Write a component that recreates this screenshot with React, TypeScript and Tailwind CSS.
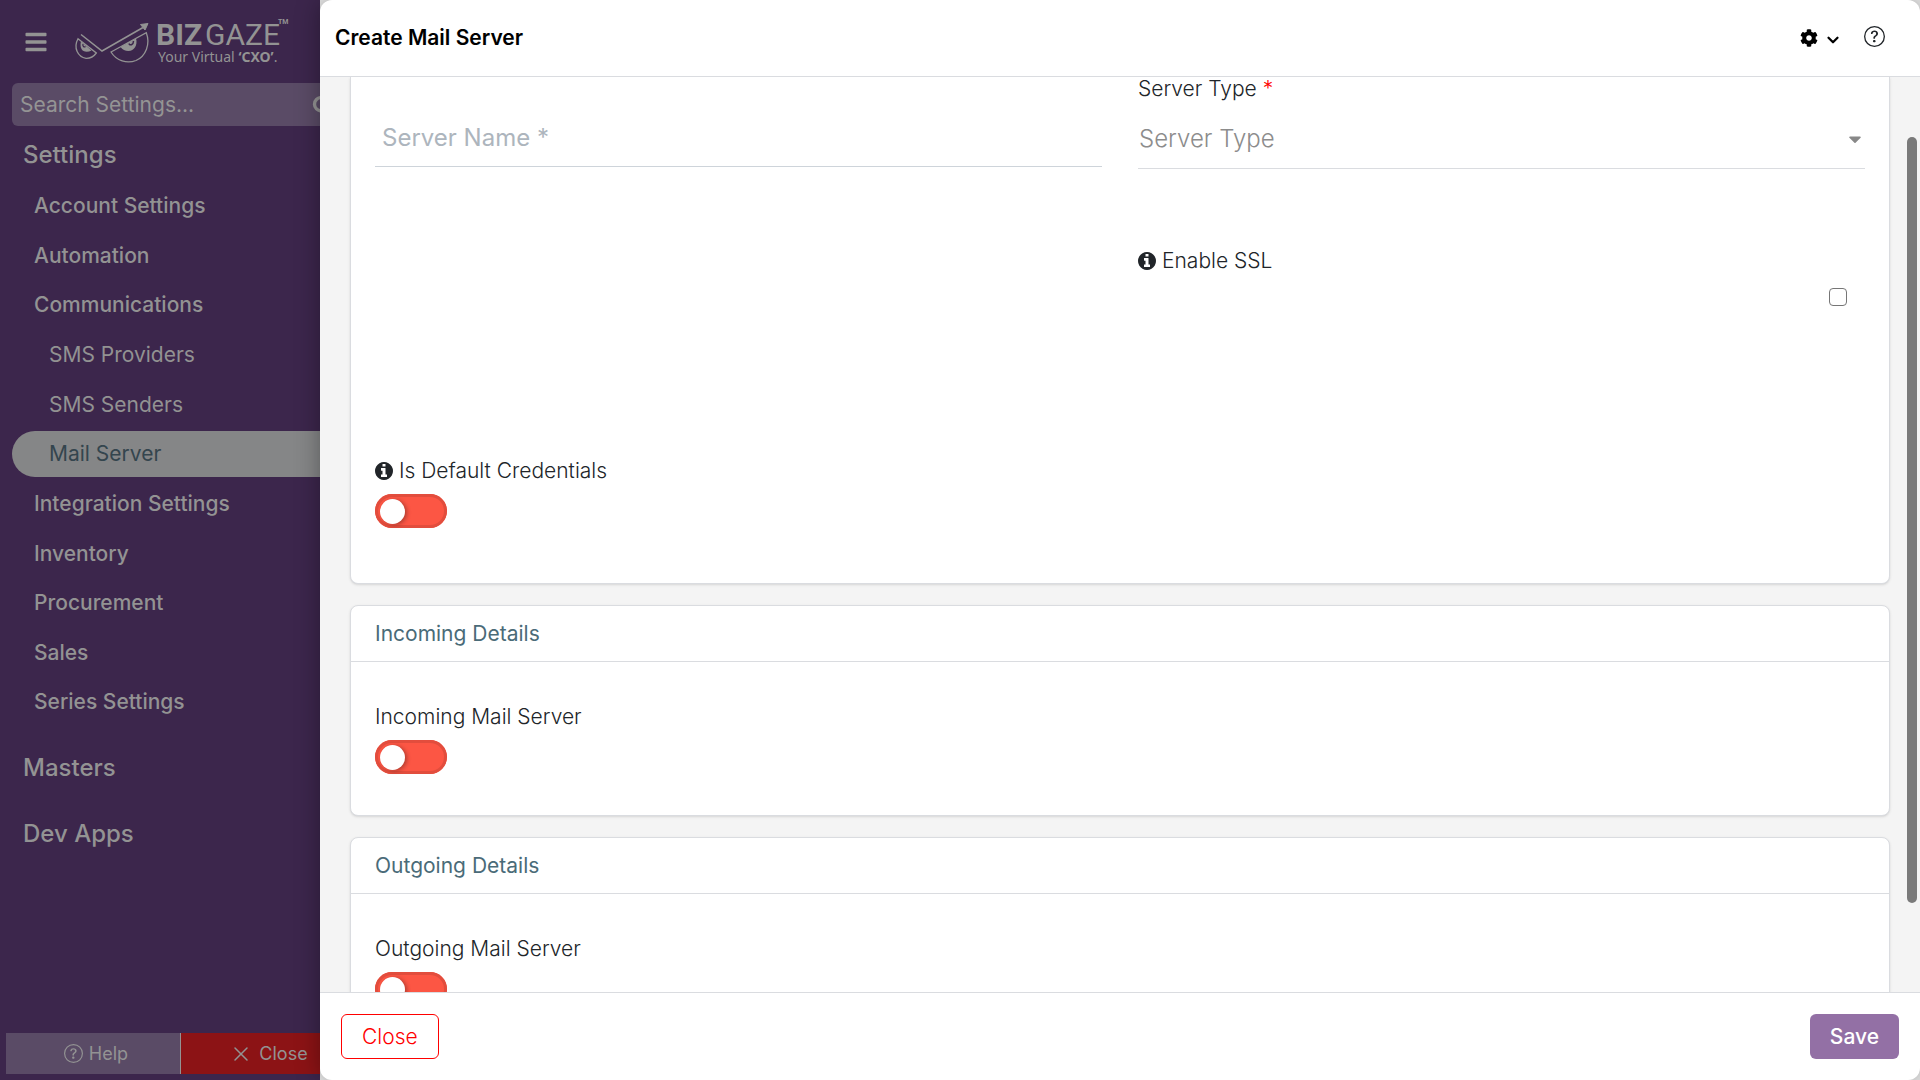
import React from 'react';
import { FaBars, FaCaretDown, FaCog } from 'react-icons/fa';
import { BsQuestionCircle } from 'react-icons/bs';
import { ChevronDown, Search, X } from 'lucide-react';

const settingsLinks = [
  { label: 'Account Settings' },
  { label: 'Automation' },
  { label: 'Communications' },
  { label: 'SMS Providers', child: true },
  { label: 'SMS Senders', child: true },
  { label: 'Mail Server', child: true, active: true },
  { label: 'Integration Settings' },
  { label: 'Inventory' },
  { label: 'Procurement' },
  { label: 'Sales' },
  { label: 'Series Settings' },
];

const linkClass = (link: { child?: boolean; active?: boolean }) => {
  if (link.active) return 'pl-[37px] h-[46px] rounded-l-full bg-[#858687] text-[#34454e]';
  if (link.child) return 'pl-[37px] h-[46px] text-[#929292]';
  return 'pl-[22px] h-[46px] font-medium text-[#939393]';
};

const Logo = () => (
  <svg viewBox="0 0 220 52" className="w-[220px] h-[52px]" fill="none" stroke="#939393" role="img" aria-label="Bizgaze">
    <path d="M9 18.500 L30 35 L71 11.500" strokeWidth="1.500" />
    <path d="M68.500 8.500 L76 7.500 L73 14 Z" fill="#939393" strokeWidth="1" />
    <path d="M6 22.800 L24.300 37 C21 41.500 18 42.500 14 42.300 C6 41 1 32 6 22.800 Z" strokeWidth="1.300" />
    <path d="M9 25.500 L19.500 34.500 C15.500 36.500 11 36 9.500 33 C8.300 30.500 8.300 28 9 25.500 Z" fill="#939393" stroke="none" />
    <path d="M11 28 C10.500 30.500 12 31.500 13.500 30.500" stroke="#3c264c" strokeWidth="1.300" />
    <path d="M39 36 L74.300 16.800 C78.500 28 74 40 64 44.500 C55 48 44.500 45 39 36 Z" strokeWidth="1.300" />
    <path d="M48.500 31 L64 22.500 C66 29 62 35 56.500 35 C53 35 50.500 33.500 48.500 31 Z" fill="#939393" stroke="none" />
    <path d="M57 27.500 C57.500 30 61.500 29 61.500 25" stroke="#3c264c" strokeWidth="1.500" />
    <text x="84" y="29" fill="#939393" stroke="none" className="font-['Roboto',sans-serif] text-[30px] font-bold">BIZ</text>
    <text x="133" y="29" fill="#939393" stroke="none" className="font-['Roboto',sans-serif] text-[30px]">GAZE</text>
    <text x="206" y="8" fill="#939393" stroke="none" className="font-['Roboto',sans-serif] text-[7px] font-bold">TM</text>
    <text x="86" y="46" fill="#939393" stroke="none" className="font-['Noto_Sans',sans-serif] text-[14px]">
      Your Virtual <tspan className="font-bold">‘CXO’</tspan>.
    </text>
  </svg>
);

const InfoIcon = () => (
  <svg viewBox="128 128 1536 1536" className="size-[18px]" fill="currentColor" aria-hidden="true">
    <path d="M1152 1376v-160q0-14-9-23t-23-9h-96v-512q0-14-9-23t-23-9h-320q-14 0-23 9t-9 23v160q0 14 9 23t23 9h96v320h-96q-14 0-23 9t-9 23v160q0 14 9 23t23 9h448q14 0 23-9t9-23zm-128-896v-160q0-14-9-23t-23-9h-192q-14 0-23 9t-9 23v160q0 14 9 23t23 9h192q14 0 23-9t9-23zm640 416q0 209-103 385.500t-279.500 279.500-385.500 103-385.500-103-279.500-279.500-103-385.500 103-385.500 279.500-279.500 385.500-103 385.500 103 279.500 279.500 103 385.500z" />
  </svg>
);

const Toggle = ({ id }: { id: string }) => (
  <input
    id={id}
    type="checkbox"
    role="switch"
    className="block appearance-none w-[72px] h-[34px] p-[5px] rounded-full bg-[#fc5644] shadow-[inset_0_0_0_3px_#e24d3d] before:block before:size-[25px] before:rounded-full before:bg-white before:shadow-[2px_1px_4px_rgba(0,0,0,0.3)] checked:bg-green-500"
  />
);

const Sidebar = () => (
  <aside className="w-80 shrink-0 h-full overflow-hidden bg-[#3c264c] text-[#939393]">
    <div className="w-[352px] h-full flex flex-col">
      <div className="flex items-center h-[83px] pl-6">
        <button type="button" aria-label="Toggle menu">
          <FaBars className="size-6" />
        </button>
        <a href="#" className="ml-6">
          <Logo />
        </a>
      </div>
      <div className="ml-3 flex items-center h-[43px] rounded-md bg-[#5a4b66] pl-2">
        <input
          type="search"
          aria-label="Search Settings"
          placeholder="Search Settings..."
          className="w-[292px] bg-transparent text-[21px] outline-none placeholder:text-[#949494] placeholder:opacity-100"
        />
        <Search className="size-5 shrink-0" strokeWidth={4} />
      </div>
      <nav className="flex flex-col ml-3">
        <a href="#" className="pl-[11px] h-[55px] leading-[58px] text-2xl font-medium">Settings</a>
        <ul className="flex flex-col h-[546px]">
          {settingsLinks.map((link) => (
            <li key={link.label} className="flex-1 flex flex-col justify-center">
              <a href="#" className={`flex items-center text-[21px] ${linkClass(link)}`}>{link.label}</a>
            </li>
          ))}
        </ul>
        <a href="#" className="pl-[11px] mt-2 h-[66px] leading-[66px] text-2xl font-medium">Masters</a>
        <a href="#" className="pl-[11px] h-[66px] leading-[66px] text-2xl font-medium">Dev Apps</a>
      </nav>
      <div className="mt-auto mb-1.5 ml-1.5 flex h-[41px] text-lg">
        <button type="button" className="w-[175px] flex items-center justify-center gap-1.5 pl-1.5 bg-[#5a4b66] border-r border-[#939393]">
          <BsQuestionCircle className="size-[19px]" /> Help
        </button>
        <button type="button" className="flex-1 flex items-center justify-center gap-1.5 pl-1 bg-[#8c1315]">
          <X className="size-6" strokeWidth={1.5} /> Close
        </button>
      </div>
    </div>
  </aside>
);

const SectionCard = ({ title, label, id }: { title: string; label: string; id: string }) => (
  <section className="shrink-0 mt-[21px] h-[211px] rounded-lg border border-[#dadce0] bg-white shadow-sm">
    <h2 className="h-14 px-6 flex items-center border-b border-[#dadce0] font-normal text-[#4a6b78]">{title}</h2>
    <div className="px-6 pt-10">
      <label htmlFor={id} className="block mb-2 leading-[30px]">{label}</label>
      <Toggle id={id} />
    </div>
  </section>
);

const MailServerForm = () => (
  <form className="flex-1 min-h-0 overflow-hidden flex flex-col px-[30px] bg-[#f4f4f4] text-[21px] font-light text-[#212529]">
    <section className="shrink-0 grid grid-cols-2 gap-x-9 px-6 pb-[55px] rounded-b-lg border border-t-0 border-[#dadce0] bg-white shadow-sm">
      <div className="pt-[31px] h-[168px]">
        <input
          type="text"
          aria-label="Server Name"
          placeholder="Server Name *"
          className="block w-full h-[59px] px-[7px] border-b border-[#ced4da] text-2xl font-normal outline-none placeholder:text-[#adb5bd] placeholder:opacity-100"
        />
      </div>
      <div className="h-[168px]">
        <label htmlFor="server-type" className="block h-[31px] leading-[24px]">
          Server Type <span className="text-[#f00]">*</span>
        </label>
        <div className="flex items-center h-[61px] pt-0.5 border-b border-[#dadce0]">
          <select id="server-type" className="appearance-none flex-1 px-px text-2xl text-[#8c8c8c] outline-none">
            <option>Server Type</option>
          </select>
          <FaCaretDown className="size-5 text-[#888] pointer-events-none" />
        </div>
      </div>
      <div className="h-[210px] col-start-2">
        <label htmlFor="enable-ssl" className="flex items-center gap-1.5 h-8">
          <InfoIcon /> Enable SSL
        </label>
        <input
          id="enable-ssl"
          type="checkbox"
          className="block ml-auto mr-[18px] mt-[11px] appearance-none size-[18px] rounded-[4px] border border-[#767676] checked:bg-blue-600"
        />
      </div>
      <div>
        <label htmlFor="default-credentials" className="flex items-center gap-1.5 h-8 mb-[7px]">
          <InfoIcon /> Is Default Credentials
        </label>
        <Toggle id="default-credentials" />
      </div>
    </section>
    <SectionCard title="Incoming Details" label="Incoming Mail Server" id="incoming" />
    <SectionCard title="Outgoing Details" label="Outgoing Mail Server" id="outgoing" />
  </form>
);

const App = () => {
  return (
    <div className="flex h-screen overflow-hidden bg-[#e9e9e9] font-['Inter',sans-serif]">
      <Sidebar />
      <main className="relative flex-1 min-w-0 flex flex-col rounded-xl bg-white shadow-[0_0_24px_rgba(0,0,0,0.35)]">
        <header className="flex items-center h-[77px] px-[15px] border-b border-[#dadce0]">
          <h1 className="text-[21px] font-semibold text-black">Create Mail Server</h1>
          <button type="button" aria-label="Form settings" className="ml-auto flex items-center gap-1.5 text-black">
            <FaCog className="size-[18px]" />
            <ChevronDown className="size-[18px] mt-1" strokeWidth={3} />
          </button>
          <button type="button" aria-label="Help" className="ml-[22px] mr-5 mb-1 text-[#212529]">
            <BsQuestionCircle className="size-[21px]" />
          </button>
        </header>
        <MailServerForm />
        <footer className="flex items-center justify-between h-[88px] px-[21px] border-t border-[#dadce0] text-[21px]">
          <button type="button" className="h-[45px] px-5 rounded-md border border-[#f00] font-light text-[#f00]">Close</button>
          <button type="button" className="h-[45px] px-5 rounded-md bg-[#9370a5] text-white font-medium">Save</button>
        </footer>
        <div className="absolute right-[3px] top-[137px] bottom-[177px] w-2.5 rounded-full bg-[#7a7a7a]" />
      </main>
    </div>
  );
};

export default App;
